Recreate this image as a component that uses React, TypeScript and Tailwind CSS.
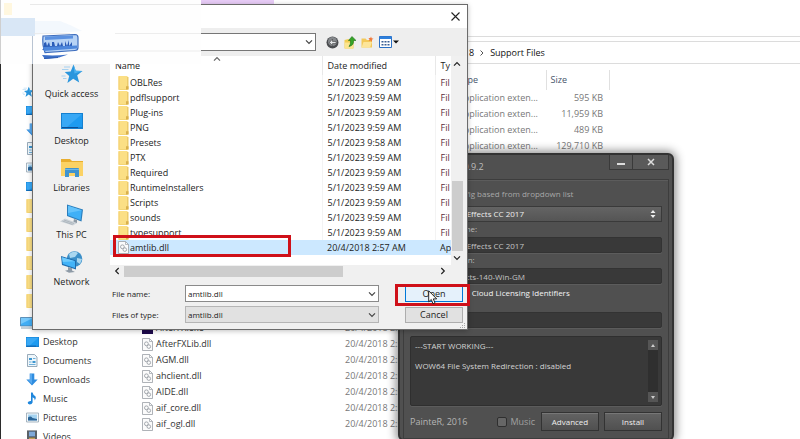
import type { ReactNode } from "react";

type IconProps = { className?: string };

function FolderIcon({ className = "w-[11px] h-[14px]" }: IconProps) {
  return (
    <svg viewBox="0 0 11 13" preserveAspectRatio="none" className={className}>
      <path d="M0.500 0h9v13h-9z" fill="#fbdf85" />
      <path d="M9 1h1.500v11.500H1.500V12H9z" fill="#eccb6b" />
      <path d="M0.500 0.500h1v12h-1z" fill="#f3d071" />
      <path d="M8 9.500h2.500v3H8z" fill="#d9b04c" />
    </svg>
  );
}

function DllIcon({ className = "w-[11px] h-[13px]" }: IconProps) {
  return (
    <svg viewBox="0 0 11 13" className={className} fill="none" stroke="#9a9fa6">
      <path d="M0.500 0.500h7l3 3v9h-10z" fill="#fbfbfb" strokeWidth="0.800" />
      <path d="M7.500 0.500v3h3" strokeWidth="0.700" />
      <circle cx="4.400" cy="5.800" r="1.900" strokeWidth="0.900" />
      <circle cx="6.800" cy="8.600" r="1.800" strokeWidth="0.900" />
    </svg>
  );
}

function StarIcon({ className = "" }: IconProps) {
  return (
    <svg viewBox="0 0 22 20" className={className}>
      <path
        d="M12.500 0.500l2.200 6.300 6.800 0.300-5.300 4.200 2 7.200-6-3.800-5.800 4.300 1.800-7-4.500-4 6-0.600z"
        fill="#2b96dd"
      />
      <path d="M12.500 0.500l2.200 6.300 6.800 0.300-8 2.500z" fill="#4db2f0" />
      <path d="M3 3h6M1 5.500h6.500M0.500 12h4M2 14.500h3.500" stroke="#9dcdf0" strokeWidth="0.900" />
    </svg>
  );
}

function DesktopIcon({ className = "" }: IconProps) {
  return (
    <svg viewBox="0 0 22 16" preserveAspectRatio="none" className={className}>
      <path d="M0 0h22v16H0z" fill="#1580d0" />
      <path d="M1 1h20v13H1z" fill="#1e9bf0" />
      <path d="M1 1h20L6 14H1z" fill="#38a8f5" />
      <path d="M1 14h16v1H1z" fill="#0c4f96" />
    </svg>
  );
}

function LibrariesIcon({ className = "" }: IconProps) {
  return (
    <svg viewBox="0 0 22 20" className={className}>
      <path d="M0 1h9l2 2h11v15H0z" fill="#e9ae2e" />
      <path d="M0 4h22v14H0z" fill="#fbd264" />
      <path d="M4 19v-8q0-1 1-1h12q1 0 1 1v8h-4v-4H8v4z" fill="#3f93cf" />
      <path d="M4 11h14v1H4z" fill="#6fb8e6" />
    </svg>
  );
}

function PcIcon({ className = "" }: IconProps) {
  return (
    <svg viewBox="0 0 24 22" className={className}>
      <path d="M7 0.500l16 5-1.500 12L7 12z" fill="#2b7dbb" />
      <path d="M8 1.800l13.800 4.400-1.200 9.800L8 11.300z" fill="#3fb0f7" />
      <path d="M8 1.800l13.800 4.400L8 9z" fill="#64c3fb" />
      <path d="M14 15l3 1v3l-4 0.500z" fill="#8e9aa5" />
      <path d="M5 14.500l12 4.500-4 2.500-13-4z" fill="#ccd3d9" />
      <path d="M4 16l10 3.500M2.500 17l10 3.500" stroke="#98a2ab" strokeWidth="0.600" />
    </svg>
  );
}

function NetworkIcon({ className = "" }: IconProps) {
  return (
    <svg viewBox="0 0 24 22" className={className}>
      <circle cx="14.500" cy="8" r="7.800" fill="#3b8fc8" />
      <path d="M9 3q5-4 9-1l-3 4-5 1zM17 7l5 1-2 5-3-2z" fill="#a9d7f0" />
      <path d="M1 5l15 4.500v9L2 14z" fill="#1f6cad" />
      <path d="M2 6.300l13 4v6.800L2.800 13z" fill="#42b3f8" />
      <path d="M2 6.300l13 4L2.800 11z" fill="#6fcbfd" />
      <path d="M8 16l4 1.300v2.200l3 1.500-6 0.800-4-2 3-0.800z" fill="#8d9aa6" />
    </svg>
  );
}

function DocumentIcon({ className = "" }: IconProps) {
  return (
    <svg viewBox="0 0 12 13" className={className}>
      <path d="M1.500 0.500h7l2.500 2.500v9.500h-9.500z" fill="#eef6fb" stroke="#8297a8" strokeWidth="0.800" />
      <path d="M3 4h3v2H3zM6.500 7h3v2h-3z" fill="#3d96d0" />
      <path d="M7 4.500h2.500M3 8h2.500M3 10.500h6.500" stroke="#5fa8d6" strokeWidth="0.900" />
    </svg>
  );
}

function DownloadIcon({ className = "" }: IconProps) {
  return (
    <svg viewBox="0 0 12 13" className={className}>
      <path d="M3.700 0.500h4.600v6h3.400L6 12.500 0.300 6.500h3.400z" fill="#2f8de0" />
      <path d="M4 1h2v10L2 7h2z" fill="#57a8ee" />
    </svg>
  );
}

function MusicIcon({ className = "" }: IconProps) {
  return (
    <svg viewBox="0 0 12 13" className={className}>
      <path
        d="M5 0.500h1.600q0.400 2.500 2.800 3.700 1.200 1.600-0.600 4.300 0.300-2.500-2.200-3.300v5.300q-0.600 2-3 2-2.100-0.300-1.900-1.900 0.600-1.800 3.300-1.600z"
        fill="#1e86dc"
      />
    </svg>
  );
}

function PictureIcon({ className = "" }: IconProps) {
  return (
    <svg viewBox="0 0 13 11" className={className}>
      <path d="M0.500 1h12v9h-12z" fill="#f4f8fb" stroke="#93a3b1" strokeWidth="0.800" />
      <path d="M2 2.500h9v6H2z" fill="#a5d3f0" />
      <path d="M2 5.500q2.500-2 4.500 0.500l4.500 1v1.500H2z" fill="#2a6598" />
    </svg>
  );
}

function VideoIcon({ className = "" }: IconProps) {
  return (
    <svg viewBox="0 0 12 13" className={className}>
      <path d="M1 0.500h10v12H1z" fill="#3a4148" />
      <path d="M3 1.500h6v5H3z" fill="#7fa9d8" />
      <path d="M3 7.500h6v5H3z" fill="#c0a25b" />
      <path d="M2 1.500v11M10 1.500v11" stroke="#dfe3e6" strokeWidth="0.800" strokeDasharray="1 1" />
    </svg>
  );
}

function MonitorIcon({ className = "" }: IconProps) {
  return (
    <svg viewBox="0 0 14 12" className={className}>
      <path d="M0.500 0.500h13v8.500h-13z" fill="#42aef5" stroke="#4b7fa8" strokeWidth="0.800" />
      <path d="M1 1h12L1 7z" fill="#77c9fb" />
      <path d="M1 11h12" stroke="#8aa0b0" />
    </svg>
  );
}

function Chevron({ className = "" }: IconProps) {
  return (
    <svg viewBox="0 0 8 6" className={className} fill="none" stroke="currentColor" strokeWidth="1.200">
      <path d="M1 1.300l3 3 3-3" />
    </svg>
  );
}

type NavItem = { icon: ReactNode; label: string };

const pinned: ReactNode[] = [
  <StarIcon className="w-3 h-3 -ml-1" />,
  <DesktopIcon className="w-3 h-[9px]" />,
  <DownloadIcon className="w-3 h-[13px]" />,
  <DocumentIcon className="w-3 h-[13px]" />,
  <PictureIcon className="w-[13px] h-[11px]" />,
  <DesktopIcon className="w-3 h-[9px]" />,
  <FolderIcon />,
  <FolderIcon />,
  <FolderIcon />,
  <FolderIcon />,
  <FolderIcon />,
  <FolderIcon />,
];

const navItems: NavItem[] = [
  { icon: <DesktopIcon className="w-[13px] h-[10px]" />, label: "Desktop" },
  { icon: <DocumentIcon className="w-3 h-[13px]" />, label: "Documents" },
  { icon: <DownloadIcon className="w-3 h-[13px]" />, label: "Downloads" },
  { icon: <MusicIcon className="w-3 h-[13px]" />, label: "Music" },
  { icon: <PictureIcon className="w-[13px] h-[11px]" />, label: "Pictures" },
  { icon: <VideoIcon className="w-3 h-[13px]" />, label: "Videos" },
];

const sizes = ["595 KB", "11,959 KB", "489 KB", "129,710 KB"];

const explorerFiles = ["AfterFXLib.dll", "AGM.dll", "ahclient.dll", "AIDE.dll", "aif_core.dll", "aif_ogl.dll"];

function Explorer() {
  return (
    <div className="flex h-full flex-col bg-white text-[#333]">
      <div className="h-[37px] shrink-0 border-b border-[#dcdcdc]" />
      <div className="mt-1 flex h-[23px] shrink-0 items-center gap-[6px] border-y border-[#dcdcdc] pl-[469px] text-[#111]">
        <span>8</span>
        <svg viewBox="0 0 4 6" className="h-[6px] w-1" fill="none" stroke="#555">
          <path d="M0.500 0.500L3 3 0.500 5.500" />
        </svg>
        <span>Support Files</span>
      </div>

      <div className="flex min-h-0 flex-1 overflow-hidden">
        <nav className="w-[142px] shrink-0 border-l border-[#2b2b2b] pt-[18px]">
          <ul className="mb-[3px] pl-[25px]">
            {pinned.map((icon, i) => (
              <li key={i} className="flex h-[19px] items-center">
                {icon}
              </li>
            ))}
          </ul>
          <div className="flex h-[19px] items-center pl-[19px]">
            <MonitorIcon className="h-3 w-[14px]" />
          </div>
          <ul className="pl-[25px]">
            {navItems.map((item) => (
              <li key={item.label}>
                <a href="#" className="flex h-[19px] items-center">
                  <span className="w-[17px]">{item.icon}</span>
                  {item.label}
                </a>
              </li>
            ))}
          </ul>
        </nav>

        <table className="mt-[6px] w-[467px] shrink-0 table-fixed self-start text-left text-[#777]">
          <colgroup>
            <col className="w-[203px]" />
            <col className="w-[113px]" />
            <col className="w-[88px]" />
            <col className="w-[63px]" />
          </colgroup>
          <thead>
            <tr className="h-5 text-[#44546a]">
              <th />
              <th />
              <th className="p-0 font-normal">Type</th>
              <th className="border-x border-[#e0e0e0] p-0 pl-1 font-normal">Size</th>
            </tr>
          </thead>
          <tbody>
            {sizes.map((size) => (
              <tr key={size} className="h-4">
                <td />
                <td />
                <td className="p-0 whitespace-nowrap">Application exten...</td>
                <td className="p-0 pr-[6px] text-right whitespace-nowrap">{size}</td>
              </tr>
            ))}
            <tr className="h-[166px]">
              <td colSpan={4} />
            </tr>
            <tr className="h-4">
              <td className="p-0 text-[#333]">
                <span className="flex items-center">
                  <span className="mr-[3px] h-[11px] w-[11px] bg-[#1f0a4d]" />
                  AfterFX.exe
                </span>
              </td>
              <td className="p-0">20/4/2018 2:57 AM</td>
            </tr>
            {explorerFiles.map((name) => (
              <tr key={name} className="h-4">
                <td className="p-0 text-[#333]">
                  <span className="flex items-center">
                    <DllIcon className="mr-[3px] h-[13px] w-[11px]" />
                    {name}
                  </span>
                </td>
                <td className="p-0">20/4/2018 2:57 AM</td>
              </tr>
            ))}
          </tbody>
        </table>
      </div>
    </div>
  );
}

const fieldClass =
  "h-4 w-full rounded-[2px] border border-[#333] bg-[#393939] pr-1 text-[#c4c4c4] shadow-[0_1px_0_#5c5c5c]";

const darkButton =
  "h-[19px] w-[58px] border border-[#333] bg-linear-to-b from-[#636363] to-[#505050] text-[#eee] shadow-[inset_0_1px_0_#777]";

function Installer() {
  return (
    <div className="w-[276px] rounded-md border-2 border-[#333] bg-[#505050] px-[3px] text-[8px] text-[#bdbdbd] shadow-[0_0_10px_2px_rgba(0,0,0,0.45)]">
      <div className="flex h-6 items-start justify-between">
        <h2 className="pt-[6px] pl-4 text-[9px]">AMTEmu v0.9.2</h2>
        <div className="flex border border-t-0 border-[#3a3a3a]">
          <button aria-label="Minimize" className="flex h-[14px] w-[22px] items-end justify-center bg-[#5a5a5a] pb-1">
            <span className="h-[2px] w-2 bg-[#ddd]" />
          </button>
          <button
            aria-label="Close"
            className="flex h-[14px] w-[36px] items-center justify-center border-l border-[#3a3a3a] bg-[#5a5a5a]"
          >
            <svg viewBox="0 0 8 8" className="h-2 w-2" stroke="#ddd" strokeWidth="1.500">
              <path d="M1 1l6 6M7 1L1 7" />
            </svg>
          </button>
        </div>
      </div>

      <div className="border border-[#3d3d3d] px-[6px] pt-2 pb-[7px] shadow-[inset_0_1px_0_#5c5c5c]">
        <label htmlFor="product" className="block h-[18px] pl-[22px] text-[#a8a8a8]">
          Load config based from dropdown list
        </label>
        <div className="grid items-center">
          <select
            id="product"
            className="col-start-1 row-start-1 h-4 appearance-none border border-[#3a3a3a] bg-linear-to-b from-[#646464] to-[#555] pl-[9px] text-[#eee]"
          >
            <option>Adobe After Effects CC 2017</option>
          </select>
          <svg
            viewBox="0 0 6 8"
            className="pointer-events-none col-start-1 row-start-1 mr-[6px] h-2 w-[6px] justify-self-end"
            fill="#eee"
          >
            <path d="M3 0l2.500 3h-5zM3 8l2.500-3h-5z" />
          </svg>
        </div>
        <label htmlFor="name" className="mt-px block h-[14px]">
          Application name:
        </label>
        <input id="name" defaultValue="Adobe After Effects CC 2017" className={`pl-[9px] ${fieldClass}`} />
        <label htmlFor="version" className="mt-px block h-[14px]">
          Software version:
        </label>
        <input id="version" defaultValue="AfterEffects-140-Win-GM" className={`pl-[22px] ${fieldClass}`} />
        <label className="mt-[2px] flex h-[14px] items-center gap-1 pl-4 text-[#f4f4f4]">
          <input type="checkbox" className="h-[9px] w-[9px] appearance-none bg-[#777]" />
          Creative Cloud Licensing Identifiers
        </label>
        <input aria-label="Library path" className={`mt-3 pl-1 ${fieldClass}`} />

        <div className="mt-2 flex h-[70px] rounded-[2px] border border-[#2f2f2f] bg-[#393939] p-[3px] shadow-[0_1px_0_#5c5c5c]">
          <textarea
            aria-label="Log"
            readOnly
            className="flex-1 resize-none overflow-hidden pt-px pl-px leading-[10px] text-[#d4d4d4]"
            defaultValue={"---START WORKING---\n\nWOW64 File System Redirection : disabled"}
          />
          <div className="flex w-[10px] flex-col justify-between bg-[#2f2f2f]">
            <button aria-label="Scroll up" className="flex h-[10px] items-center justify-center bg-[#555]">
              <svg viewBox="0 0 4 3" className="h-[3px] w-1" fill="#ccc">
                <path d="M2 0l2 3H0z" />
              </svg>
            </button>
            <button aria-label="Scroll down" className="flex h-[10px] items-center justify-center bg-[#555]">
              <svg viewBox="0 0 4 3" className="h-[3px] w-1" fill="#ccc">
                <path d="M2 3l2-3H0z" />
              </svg>
            </button>
          </div>
        </div>

        <div className="mt-[6px] flex items-center">
          <span className="flex-1 text-[9px] text-[#b5b5b5]">PainteR, 2016</span>
          <label className="mr-[6px] flex items-center gap-1 text-[9px] text-[#a0a0a0]">
            <input
              type="checkbox"
              className="h-[10px] w-[10px] appearance-none rounded-[2px] border border-[#2f2f2f] bg-[#666]"
            />
            Music
          </label>
          <button className={darkButton}>Advanced</button>
          <button className={`ml-[5px] ${darkButton}`}>Install</button>
        </div>
      </div>
    </div>
  );
}

const places = [
  { label: "Quick access", icon: <StarIcon className="h-[20px] w-[22px]" /> },
  { label: "Desktop", icon: <DesktopIcon className="h-4 w-[22px]" /> },
  { label: "Libraries", icon: <LibrariesIcon className="h-[20px] w-[22px]" /> },
  { label: "This PC", icon: <PcIcon className="h-[22px] w-6" /> },
  { label: "Network", icon: <NetworkIcon className="h-[22px] w-6" /> },
];

const folders = [
  { name: "OBLRes", date: "5/1/2023 9:59 AM" },
  { name: "pdflsupport", date: "5/1/2023 9:59 AM" },
  { name: "Plug-ins", date: "5/1/2023 9:59 AM" },
  { name: "PNG", date: "5/1/2023 9:59 AM" },
  { name: "Presets", date: "5/1/2023 9:58 AM" },
  { name: "PTX", date: "5/1/2023 9:59 AM" },
  { name: "Required", date: "5/1/2023 9:59 AM" },
  { name: "RuntimeInstallers", date: "5/1/2023 9:59 AM" },
  { name: "Scripts", date: "5/1/2023 9:59 AM" },
  { name: "sounds", date: "5/1/2023 9:59 AM" },
  { name: "typesupport", date: "5/1/2023 9:59 AM" },
];

function Toolbar() {
  return (
    <div className="flex h-7 shrink-0 items-center bg-[#eeeeee]">
      <div className="ml-[80px] grid w-[203px] items-center">
        <select
          aria-label="Look in"
          className="col-start-1 row-start-1 h-[18px] appearance-none border border-[#767676] bg-white"
        />
        <Chevron className="pointer-events-none col-start-1 row-start-1 mr-[3px] h-[6px] w-2 justify-self-end text-[#444]" />
      </div>
      <div className="ml-[10px] flex items-center gap-[5px]">
        <button aria-label="Back">
          <svg viewBox="0 0 13 13" className="h-[13px] w-[13px]">
            <circle cx="6.500" cy="6.500" r="6" fill="#4b4d50" />
            <circle cx="6.500" cy="5.500" r="4.500" fill="#85888c" />
            <path d="M6.500 3L3.500 6.500l3 3V7.500H10v-2H6.500z" fill="#e4e6e8" stroke="#333" strokeWidth="0.500" />
          </svg>
        </button>
        <button aria-label="Up one level">
          <svg viewBox="0 0 12 13" className="h-[13px] w-3">
            <path d="M0.500 4l4-1 1 1h4v8.500h-9z" fill="#f2cd52" />
            <path d="M1 6.500h8v6H1z" fill="#fce58f" />
            <path d="M8 0.500l4 4H9.500q0.500 5-4.500 6 2-2 1.500-6H4.500z" fill="#35a428" stroke="#1c6e18" strokeWidth="0.600" />
          </svg>
        </button>
        <button aria-label="New folder">
          <svg viewBox="0 0 13 12" className="h-3 w-[13px]">
            <path d="M0.500 2.500h4l1.500 1.500h5v7.500H0.500z" fill="#f3c95a" />
            <path d="M2.500 6h8.500l-2 5.500H0.500z" fill="#fde59a" />
            <path d="M10 0.500l0.700 1.700 1.800 0.500-1.600 1 0.100 2-1.500-1.200-1.800 0.600 0.800-1.800-1.100-1.400 1.900 0.100z" fill="#f0793a" />
          </svg>
        </button>
        <button aria-label="View menu" className="flex items-center gap-px">
          <svg viewBox="0 0 13 12" className="h-3 w-[13px]">
            <path d="M0.500 0.500h12v11h-12z" fill="#fff" stroke="#2a6fc4" />
            <path d="M0.500 0.500h12v2.500h-12z" fill="#2f80dc" />
            <path d="M2.500 5h2v1.500h-2zM5.500 5h2v1.500h-2zM8.500 5h2v1.500h-2zM2.500 8h2v1.500h-2zM5.500 8h2v1.500h-2zM8.500 8h2v1.500h-2z" fill="#3a5f94" />
          </svg>
          <svg viewBox="0 0 6 4" className="h-1 w-[6px]" fill="#111">
            <path d="M0 0.500h6L3 3.500z" />
          </svg>
        </button>
      </div>
    </div>
  );
}

function OpenDialog() {
  return (
    <div className="flex w-[436px] flex-col border border-[#6b6b6b] bg-[#f0f0f0] text-[#222] shadow-[0_1px_5px_rgba(0,0,0,0.25)]">
      <div className="flex h-[23px] items-center justify-end bg-white pr-[7px]">
        <button aria-label="Close dialog">
          <svg viewBox="0 0 9 9" className="h-[9px] w-[9px]" stroke="#222" strokeWidth="1.100">
            <path d="M0.500 0.500l8 8M8.500 0.500l-8 8" />
          </svg>
        </button>
      </div>
      <Toolbar />

      <div className="flex">
        <ul className="w-[77px] shrink-0 pt-[7px]">
          {places.map((place) => (
            <li key={place.label}>
              <a href="#" className="flex h-[47px] w-full flex-col items-center">
                <span className="flex h-[22px] items-center">{place.icon}</span>
                <span className="mt-[3px] whitespace-nowrap">{place.label}</span>
              </a>
            </li>
          ))}
        </ul>

        <div className="flex min-w-0 flex-1 flex-col">
          <div className="mr-1 flex">
            <div className="h-[209px] min-w-0 flex-1 overflow-hidden bg-white">
              <table className="w-full table-fixed text-left">
                <colgroup>
                  <col className="w-[212px]" />
                  <col className="w-[113px]" />
                  <col />
                </colgroup>
                <thead>
                  <tr className="h-[19px]">
                    <th className="p-0 pl-[5px] font-normal">Name</th>
                    <th className="border-l border-[#e8e8e8] p-0 pl-[5px] font-normal">Date modified</th>
                    <th className="border-l border-[#e8e8e8] p-0 pl-[5px] font-normal">Ty</th>
                  </tr>
                </thead>
                <tbody>
                  {folders.map((folder) => (
                    <tr key={folder.name} className="h-[15px]">
                      <td className="p-0 pl-2">
                        <span className="flex items-center gap-px">
                          <FolderIcon />
                          {folder.name}
                        </span>
                      </td>
                      <td className="border-l border-[#f3f3f3] p-0 pl-[5px] whitespace-nowrap">{folder.date}</td>
                      <td className="border-l border-[#f3f3f3] p-0 pl-[5px] text-[#5a3038]">Fil</td>
                    </tr>
                  ))}
                  <tr className="h-[15px] bg-[#cce8ff]">
                    <td className="p-0 pl-2">
                      <span className="flex items-center gap-px">
                        <DllIcon />
                        amtlib.dll
                      </span>
                    </td>
                    <td className="p-0 pl-[5px] whitespace-nowrap">20/4/2018 2:57 AM</td>
                    <td className="p-0 pl-[5px]">Ap</td>
                  </tr>
                </tbody>
              </table>
            </div>
            <div className="flex w-3 flex-col items-center pt-[5px] pb-1">
              <Chevron className="h-[6px] w-2 rotate-180" />
              <div className="mt-auto mb-1 h-[70px] w-[11px] bg-[#cdcdcd]" />
              <Chevron className="h-[6px] w-2" />
            </div>
          </div>

          <div className="flex h-3 items-center">
            <Chevron className="mx-[3px] h-[6px] w-2 rotate-90" />
            <div className="h-[11px] w-[219px] bg-[#cdcdcd]" />
            <Chevron className="mr-5 ml-auto h-[6px] w-2 -rotate-90" />
          </div>

          <div className="mt-[8px] grid grid-cols-[73px_194px_58px] items-center gap-y-1 pl-[2px] text-[8px]">
            <label htmlFor="file-name">File name:</label>
            <div className="grid items-center">
              <input
                id="file-name"
                defaultValue="amtlib.dll"
                className="col-start-1 row-start-1 h-[17px] w-full border border-[#8a8a8a] bg-white px-[2px]"
              />
              <Chevron className="pointer-events-none col-start-1 row-start-1 mr-[3px] h-[6px] w-2 justify-self-end text-[#444]" />
            </div>
            <button className="ml-[26px] h-4 w-[58px] border border-[#0078d7] bg-[#e5f1fb] text-[9px]">Open</button>
            <label htmlFor="file-type">Files of type:</label>
            <div className="grid items-center">
              <select
                id="file-type"
                className="col-start-1 row-start-1 h-[17px] w-full appearance-none border border-[#b5b5b5] bg-[#e1e1e1] px-[2px]"
              >
                <option>amtlib.dll</option>
              </select>
              <Chevron className="pointer-events-none col-start-1 row-start-1 mr-[3px] h-[6px] w-2 justify-self-end text-[#444]" />
            </div>
            <button className="ml-[26px] h-4 w-[58px] border border-[#adadad] bg-[#e1e1e1] text-[9px]">Cancel</button>
          </div>
          <svg viewBox="0 0 6 6" className="mr-px h-[6px] w-[6px] self-end" fill="#a5a5a5">
            <path d="M4 0h1v1H4zM2 2h1v1H2zM4 2h1v1H4zM0 4h1v1H0zM2 4h1v1H2zM4 4h1v1H4z" />
          </svg>
        </div>
      </div>
    </div>
  );
}

/* Painted-over corner that hides the folder path */
function Redaction() {
  return (
    <svg viewBox="0 0 201 64" className="h-16 w-[201px]">
      <path d="M0 0h201v64H0z" fill="#fefefe" />
      <path d="M0 0h1v64H0z" fill="#cfcfcf" />
      <path d="M4 3h8v12H4z" fill="#fff7df" />
      <path d="M1 18h34v18H1z" fill="#d9e7f6" />
      <path d="M35 21h25l10 4 12 6-47 4z" fill="#f3f8fd" />
      <path d="M30 4.500h171" stroke="#e3e3e3" strokeWidth="0.800" />
      <path d="M32.500 36v28" stroke="#b9c4d2" />
      <path d="M34 33.500h36M115 33.500h86M80 51h121" stroke="#e8e8e8" strokeWidth="0.800" />
      <path d="M43 36l32-1.500q3 0 3 3v10q0 3-3 3l-30 2q-3-8-2-16.500z" fill="#b7d3f5" stroke="#3d6dbd" strokeWidth="1.200" />
      <path d="M45 36.500l28-1v3l-28 1.500z" fill="#5b91e0" />
      <path d="M44 48v-5l2-1 1 4 2-4 1 4h2v-4h2l1 4h2l1-4 2 4 2-4 1 4h2v-5l2 5 2-6v6l3-4v6l-30 2z" fill="#2a5cb8" />
      <path d="M43 47l34-1.500v3L44 51z" fill="#4d87dc" />
      <path d="M42 55q13 1 26-0.500l-9 3-14 1.500z" fill="#3c6fc8" />
      <path d="M44 58.500l14-1" stroke="#2d5db3" />
    </svg>
  );
}

export default function App() {
  return (
    <div className="relative h-screen overflow-hidden bg-white font-['Open_Sans','Noto_Sans',sans-serif] text-[9px] leading-[12px]">
      <Explorer />
      <div className="absolute top-0 left-[201px] h-1 w-[73px] bg-[#e8ccf7]" />

      <div className="absolute top-[153px] left-[398px]">
        <Installer />
      </div>

      <div className="absolute top-1 left-8">
        <OpenDialog />
      </div>

      <div className="absolute top-0 left-0">
        <Redaction />
      </div>

      {/* sort arrow above the Name column */}
      <Chevron className="absolute top-[56px] left-[213px] h-[6px] w-2 rotate-180 text-[#666]" />

      <div className="absolute top-[235px] left-[113px] h-[22px] w-[178px] border-[3px] border-[#cf1019]" />
      <div className="absolute top-[284px] left-[395px] h-[22px] w-[75px] border-[3px] border-[#cf1019]" />

      <svg viewBox="0 0 10 15" className="absolute top-[290px] left-[428px] h-[15px] w-[10px]">
        <path
          d="M0.700 0.800v11l2.600-2.300 1.700 4.300 2-0.900-1.700-4h3.400z"
          fill="#fff"
          stroke="#111"
          strokeWidth="0.900"
        />
      </svg>
    </div>
  );
}
